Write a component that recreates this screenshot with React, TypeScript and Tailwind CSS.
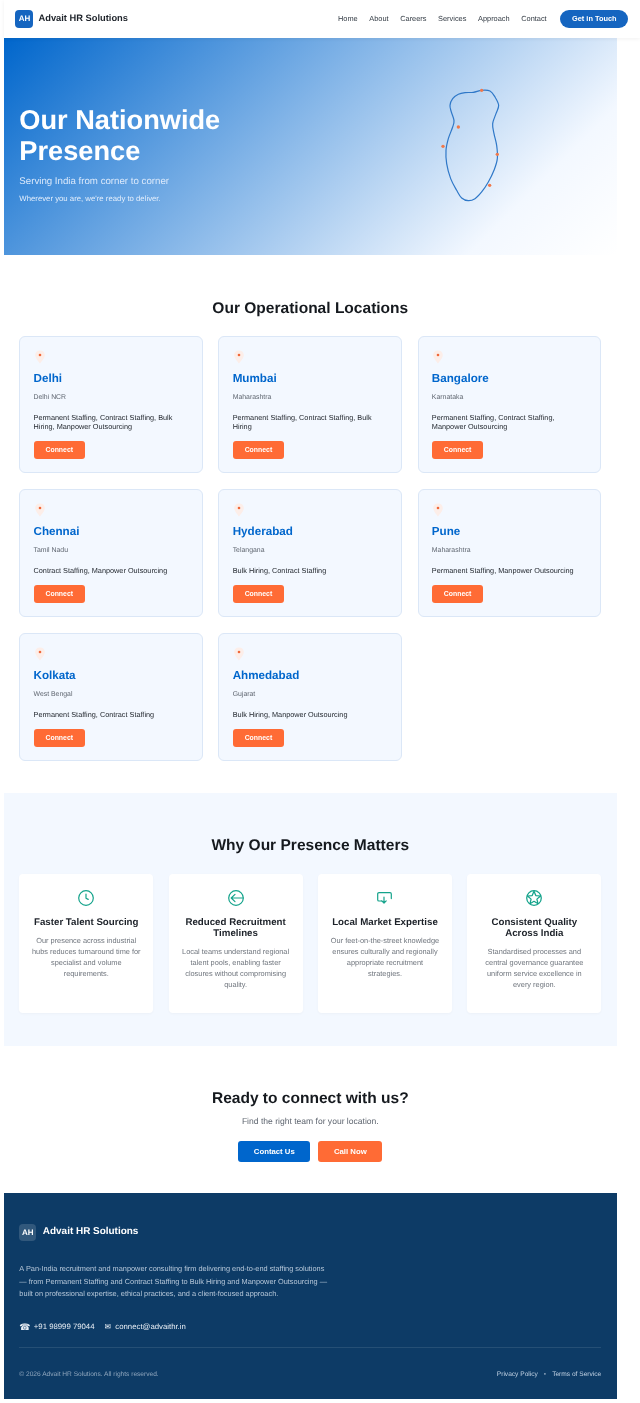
import React from "react";

const F = "font-['Liberation_Sans',Arial,sans-serif] [text-rendering:geometricPrecision] [filter:brightness(0.999)]";

const pts: [number, number][] = [[185,60],[210,62],[225,80],[236,105],[228,130],[218,160],[222,190],[230,225],[232,265],[222,300],[205,335],[185,365],[165,385],[145,391],[125,383],[110,360],[92,325],[80,280],[78,240],[85,205],[98,170],[102,150],[94,125],[90,105],[98,85],[115,72],[135,67],[160,66]];
function smooth(p: [number, number][]) {
  const n = p.length;
  let d = `M${p[0][0]} ${p[0][1]}`;
  for (let i = 0; i < n; i++) {
    const a = p[(i - 1 + n) % n], b = p[i], c = p[(i + 1) % n], e = p[(i + 2) % n];
    d += `C${(b[0] + (c[0] - a[0]) / 6).toFixed(1)} ${(b[1] + (c[1] - a[1]) / 6).toFixed(1)} ${(c[0] - (e[0] - b[0]) / 6).toFixed(1)} ${(c[1] - (e[1] - b[1]) / 6).toFixed(1)} ${c[0]} ${c[1]}`;
  }
  return d + "Z";
}

function IndiaMap() {
  return (
    <svg viewBox="60 50 190 350" className="w-[63.33px] h-[116.67px]" fill="none">
      <path d={smooth(pts)} stroke="#2f78c8" strokeWidth="3.6" />
      {[[185,60],[115,170],[69,228],[232,252],[209,345]].map(([x, y]) => (
        <circle key={x} cx={x} cy={y} r="5" fill="#f0784a" />
      ))}
    </svg>
  );
}

function Pin() {
  return (
    <svg viewBox="0 0 12 14" className="w-[12px] h-[14px]">
      <path d="M6 0.5C3 0.5 1.2 2.6 1.2 5C1.2 8 4.6 11.5 6 13.5C7.4 11.5 10.8 8 10.8 5C10.8 2.6 9 0.5 6 0.5Z" fill="#fceee9" />
      <circle cx="6" cy="5" r="1.3" fill="#f0683a" />
    </svg>
  );
}

const cities = [
  ["Delhi", "Delhi NCR", "Permanent Staffing, Contract Staffing, Bulk Hiring, Manpower Outsourcing"],
  ["Mumbai", "Maharashtra", "Permanent Staffing, Contract Staffing, Bulk Hiring"],
  ["Bangalore", "Karnataka", "Permanent Staffing, Contract Staffing, Manpower Outsourcing"],
  ["Chennai", "Tamil Nadu", "Contract Staffing, Manpower Outsourcing"],
  ["Hyderabad", "Telangana", "Bulk Hiring, Contract Staffing"],
  ["Pune", "Maharashtra", "Permanent Staffing, Manpower Outsourcing"],
  ["Kolkata", "West Bengal", "Permanent Staffing, Contract Staffing"],
  ["Ahmedabad", "Gujarat", "Bulk Hiring, Manpower Outsourcing"],
];

function Card({ c }: { c: string[] }) {
  return (
    <div className="rounded-[6px] border-[0.5px] border-[#dbe7f7] bg-[#f3f8ff] px-[13.2px] pt-[13px] pb-[13px] flex flex-col">
      <div className="h-[14px]"><Pin /></div>
      <h3 className="mt-[7px] text-[11.65px] leading-[15px] text-[#0066cc] font-bold">{c[0]}</h3>
      <p className="mt-[7px] text-[6.9px] leading-[10px] text-[#5f6670]">{c[1]}</p>
      <p className="mt-[11px] text-[7.3px] leading-[8.5px] text-[#1d2229]">{c[2]}</p>
      <button className="mt-[10px] w-[51.5px] h-[18px] rounded-[3px] bg-[#ff6b35] text-white text-[6.9px] font-bold">Connect</button>
    </div>
  );
}

const teal = "#14a38b";
function IconClock() {
  return (
    <svg viewBox="0 0 16 16" className="w-[16px] h-[16px]" fill="none" stroke={teal} strokeWidth="1.2" strokeLinecap="round" strokeLinejoin="round">
      <circle cx="8" cy="8" r="7.3" /><path d="M8 4V8.2L10.2 9.4" />
    </svg>
  );
}
function IconArrow() {
  return (
    <svg viewBox="0 0 16 16" className="w-[16px] h-[16px]" fill="none" stroke={teal} strokeWidth="1.2" strokeLinecap="round" strokeLinejoin="round">
      <circle cx="8" cy="8" r="7.3" /><path d="M15 8H3.4M7 4.4L3.2 8L7 11.6" />
    </svg>
  );
}
function IconScreen() {
  return (
    <svg viewBox="0 0 15 12" className="w-[15px] h-[12px]" fill="none" stroke={teal} strokeWidth="1.2" strokeLinecap="round" strokeLinejoin="round">
      <path d="M4.8 9H2A1.3 1.3 0 0 1 .7 7.7V1.9A1.3 1.3 0 0 1 2 .6H13A1.3 1.3 0 0 1 14.3 1.9V6.6" />
      <path d="M7 5V10.8M4.8 8.8L7 11L9.2 8.8" />
    </svg>
  );
}
function IconStar() {
  return (
    <svg viewBox="0 0 16 16" className="w-[16px] h-[16px]" fill="none" stroke={teal} strokeWidth="1.25" strokeLinejoin="round">
      <circle cx="8" cy="8" r="7.3" />
      <path d="M8 1.2L9.8 5.6L14.5 6L10.9 9.1L12 13.7L8 11.3L4 13.7L5.1 9.1L1.5 6L6.2 5.6Z" />
    </svg>
  );
}

const why: [React.ReactNode, string, string][] = [
  [<IconClock />, "Faster Talent Sourcing", "Our presence across industrial hubs reduces turnaround time for specialist and volume requirements."],
  [<IconArrow />, "Reduced Recruitment Timelines", "Local teams understand regional talent pools, enabling faster closures without compromising quality."],
  [<IconScreen />, "Local Market Expertise", "Our feet-on-the-street knowledge ensures culturally and regionally appropriate recruitment strategies."],
  [<IconStar />, "Consistent Quality Across India", "Standardised processes and central governance guarantee uniform service excellence in every region."],
];

export default function App() {
  return (
    <div className={`${F} w-[640px] h-[1403px] overflow-hidden bg-white pl-[3.8px]`}>
      <header className="w-[636.2px] h-[38px] bg-white shadow-[0_1px_4px_rgba(0,0,0,0.06)] flex items-center justify-between pl-[11.7px] pr-[11.7px] relative z-10">
        <div className="flex items-center gap-[5px]">
          <div className="w-[18px] h-[18px] rounded-[4px] bg-[#1565c0] text-white text-[8px] font-bold flex items-center justify-center">AH</div>
          <span className="text-[9.32px] font-bold text-[#1d2229]">Advait HR Solutions</span>
        </div>
        <nav className="flex items-center gap-[11.65px] text-[7.38px] text-[#333b44]">
          <a>Home</a><a>About</a><a>Careers</a><a>Services</a><a>Approach</a><a>Contact</a>
          <button className="ml-[2px] w-[68px] h-[18px] rounded-[9px] bg-[#1565c0] text-white text-[7.38px] font-bold">Get in Touch</button>
        </nav>
      </header>
      <main className="w-[613px]">
        <section className="h-[217px] bg-[linear-gradient(135deg,#0066cc_0%,#f3f8ff_82%,#ffffff_100%)] flex items-center justify-between pl-[15.54px]">
          <div className="text-white mt-[16px]">
            <h1 className="text-[27.2px] leading-[31.3px] font-bold">Our Nationwide<br />Presence</h1>
            <p className="mt-[9px] text-[9.7px] leading-[14px] text-[#dbe9fb]">Serving India from corner to corner</p>
            <p className="mt-[4px] text-[7.77px] leading-[12px] text-[#e3eefc]">Wherever you are, we're ready to deliver.</p>
          </div>
          <div className="mr-[113px] mb-[2px]"><IndiaMap /></div>
        </section>

        <section className="px-[15.54px] pt-[44px] pb-[32px]">
          <h2 className="text-center text-[15.54px] leading-[20px] font-bold text-[#15191e]">Our Operational Locations</h2>
          <div className="mt-[17px] grid grid-cols-3 gap-x-[15.54px] gap-y-[15.5px]">
            {cities.map((c) => <Card key={c[0]} c={c} />)}
          </div>
        </section>

        <section className="bg-[#f3f8ff] px-[15.54px] pt-[43px] pb-[33px]">
          <h2 className="text-center text-[15.54px] leading-[20px] font-bold text-[#15191e]">Why Our Presence Matters</h2>
          <div className="mt-[18px] grid grid-cols-4 gap-[15.54px]">
            {why.map(([icon, t, d]) => (
              <div key={t} className="h-[139px] rounded-[4px] bg-white shadow-[0_1px_3px_rgba(0,0,0,0.03)] px-[11.6px] pt-[16px] text-center">
                <div className="h-[16px] flex justify-center items-center">{icon}</div>
                <h3 className="mt-[10.5px] text-[9.71px] leading-[11.2px] font-bold text-[#1d2229]">{t}</h3>
                <p className="mt-[7px] text-[7.38px] leading-[11.07px] text-[#70767e]">{d}</p>
              </div>
            ))}
          </div>
        </section>

        <section className="h-[147px] pt-[43px] text-center">
          <h2 className="text-[15.54px] leading-[20px] font-bold text-[#15191e]">Ready to connect with us?</h2>
          <p className="mt-[6px] text-[8.55px] leading-[12px] text-[#5f6670]">Find the right team for your location.</p>
          <div className="mt-[14px] flex justify-center gap-[8px]">
            <button className="w-[72px] h-[21px] rounded-[3px] bg-[#0066cc] text-white text-[7.77px] font-bold">Contact Us</button>
            <button className="w-[64px] h-[21px] rounded-[3px] bg-[#ff6b35] text-white text-[7.77px] font-bold">Call Now</button>
          </div>
        </section>

        <footer className="h-[206px] bg-[#0d3b66] px-[15.54px] pt-[31px] text-white">
          <div className="flex items-center gap-[6.5px]">
            <div className="w-[17px] h-[17px] rounded-[4px] bg-white/15 text-[8px] font-bold flex items-center justify-center">AH</div>
            <span className="text-[9.95px] font-bold">Advait HR Solutions</span>
          </div>
          <p className="mt-[22px] w-[312px] text-[7.36px] leading-[12.55px] text-[#b6c7d9]">A Pan-India recruitment and manpower consulting firm delivering end-to-end staffing solutions — from Permanent Staffing and Contract Staffing to Bulk Hiring and Manpower Outsourcing — built on professional expertise, ethical practices, and a client-focused approach.</p>
          <div className="mt-[20px] flex gap-[10px] text-[7.77px] leading-[12px] text-[#e8eef5]">
            <span className="flex items-center"><span className="text-[9px] w-[14.5px]">☎</span>+91 98999 79044</span>
            <span>✉&nbsp; connect@advaithr.in</span>
          </div>
          <div className="mt-[14px] border-t border-white/10 pt-[22px] flex justify-between items-center text-[6.6px] leading-[10px]">
            <span className="text-[#8fa6bd]">© 2026 Advait HR Solutions. All rights reserved.</span>
            <span className="flex gap-[6px] text-[#c3d3e4]"><a>Privacy Policy</a><span className="text-[#8fa6bd]">•</span><a>Terms of Service</a></span>
          </div>
        </footer>
      </main>
    </div>
  );
}
